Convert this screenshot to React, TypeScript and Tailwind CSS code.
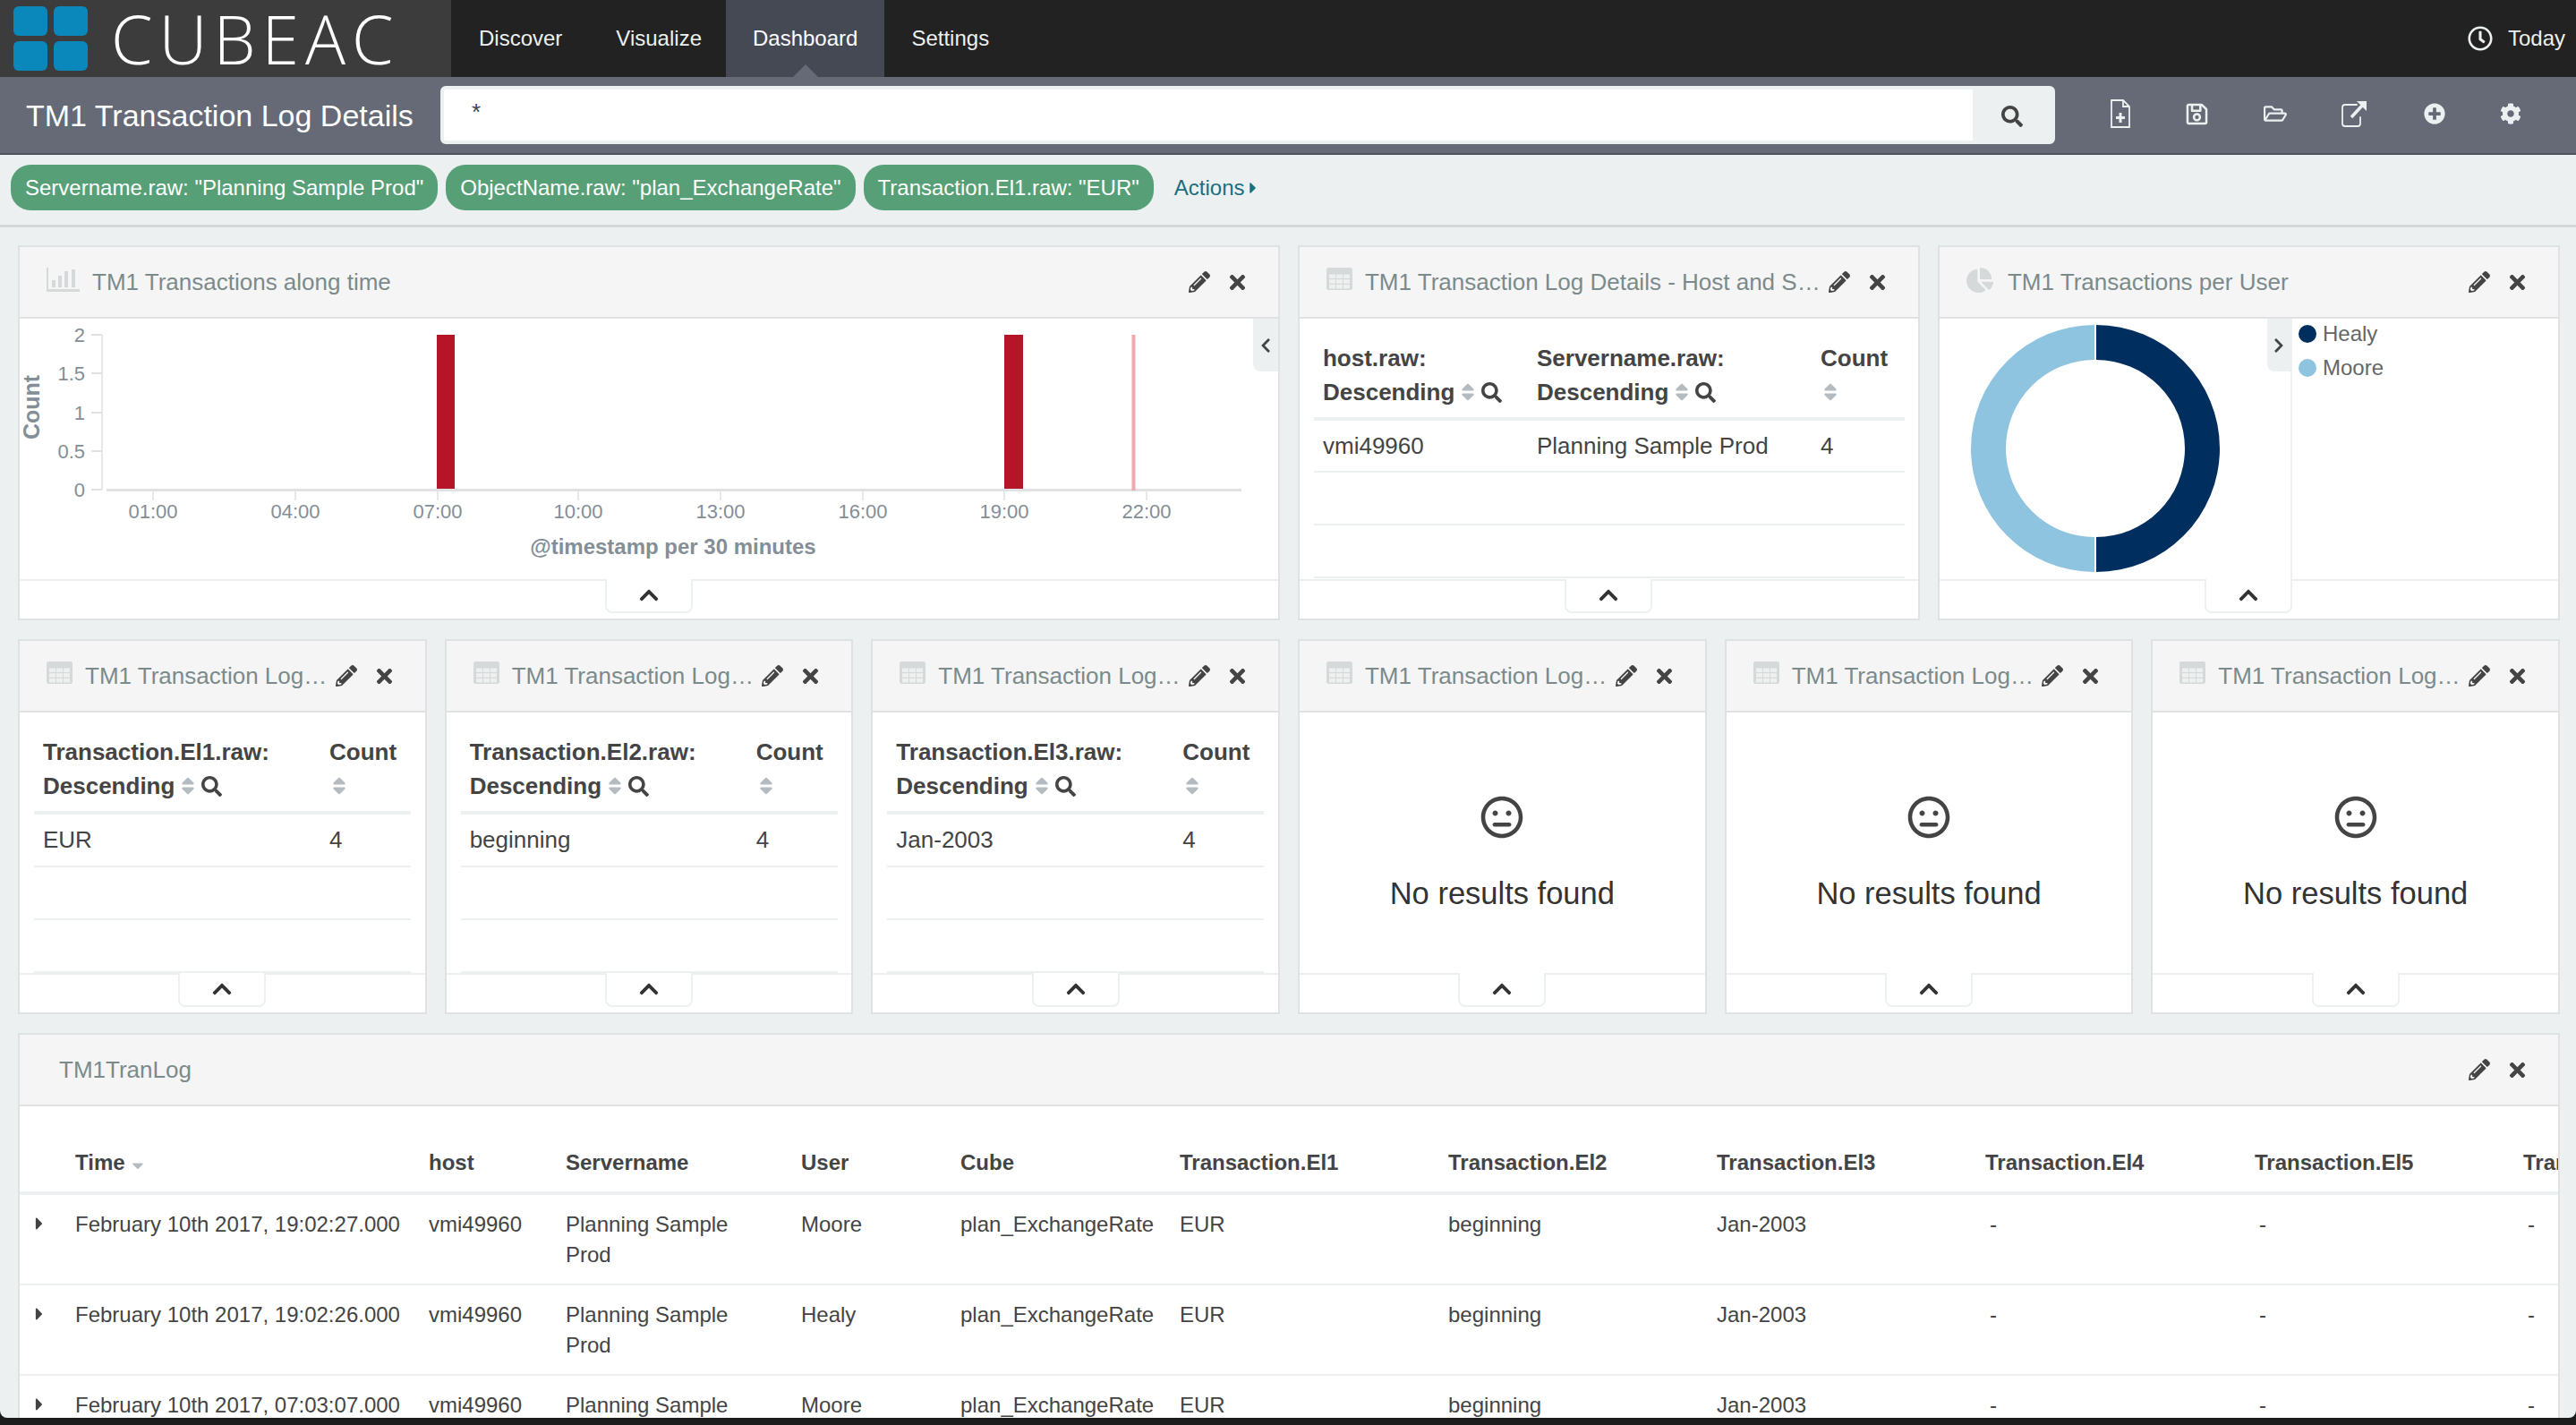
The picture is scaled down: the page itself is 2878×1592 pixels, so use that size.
import type { ReactNode } from 'react';
import {
  FaCaretDown,
  FaCaretRight,
  FaChartPie,
  FaChevronLeft,
  FaChevronRight,
  FaChevronUp,
  FaCog,
  FaPencilAlt,
  FaPlusCircle,
  FaRegClock,
  FaRegFolderOpen,
  FaRegMeh,
  FaRegSave,
  FaSearch,
  FaSort,
  FaTimes,
} from 'react-icons/fa';

const navItems = ['Discover', 'Visualize', 'Dashboard', 'Settings'];
const filters = [
  'Servername.raw: "Planning Sample Prod"',
  'ObjectName.raw: "plan_ExchangeRate"',
  'Transaction.El1.raw: "EUR"',
];

function BarChartIcon() {
  return (
    <svg width="37" height="27" viewBox="0 0 37 27" className="-mt-[5px] shrink-0 text-[#d5d9da]" fill="currentColor">
      <rect x="0" y="0" width="2" height="27" />
      <rect x="0" y="24" width="37" height="3" />
      <rect x="6" y="14" width="4" height="8" />
      <rect x="13" y="9" width="4" height="13" />
      <rect x="20" y="4" width="4" height="18" />
      <rect x="28" y="2" width="4" height="20" />
    </svg>
  );
}

// fa-table has a header band and three rows of small cells
function TableIcon() {
  const cells = [];
  for (let r = 0; r < 3; r++) {
    for (let c = 0; c < 3; c++) {
      cells.push(<rect key={`${r}${c}`} x={3 + c * 8} y={7.5 + r * 5.7} width="7" height="4.5" fill="#eef0f0" />);
    }
  }
  return (
    <svg width="29" height="25" viewBox="0 0 29 25" className="-mt-[7px] shrink-0">
      <rect width="29" height="25" rx="2.5" fill="#d5d9da" />
      {cells}
    </svg>
  );
}

function FilePlusIcon() {
  return (
    <svg width="22" height="32" viewBox="0 0 22 32" fill="none" stroke="currentColor" strokeWidth="1.8">
      <path d="M1 1h13l7 7v23H1z" />
      <path d="M14 1v7h7" />
      <path d="M11 15v11M6 20.5h10" strokeWidth="3" />
    </svg>
  );
}

function ShareIcon() {
  return (
    <svg width="28" height="30" viewBox="0 0 28 30" fill="none" stroke="currentColor" strokeWidth="1.8">
      <path d="M17 5H4a3 3 0 0 0-3 3v18a3 3 0 0 0 3 3h14a3 3 0 0 0 3-3v-7" strokeLinecap="round" />
      <path d="M11 19 23 6" strokeWidth="3.5" />
      <path d="M17 1h11v11z" fill="currentColor" stroke="none" />
    </svg>
  );
}

function Panel({
  title,
  icon,
  className,
  footer = true,
  children,
}: {
  title: string;
  icon?: ReactNode;
  className: string;
  footer?: boolean;
  children: ReactNode;
}) {
  return (
    <section className={`relative flex flex-col border-2 border-[#dfe1e2] bg-white ${className}`}>
      <header className="flex h-[80px] shrink-0 items-center border-b-2 border-[#dfe1e2] bg-[#f5f5f5] pr-[33px] pl-[30px]">
        {icon}
        <h2 className="ml-[14px] min-w-0 flex-1 truncate text-[26px] text-[#7b8a8b]">{title}</h2>
        <FaPencilAlt size={24} className="ml-[9px] shrink-0 text-[#444]" />
        <FaTimes size={25} className="ml-[18px] shrink-0 text-[#444]" />
      </header>
      <div className="relative min-h-0 flex-1 overflow-hidden">{children}</div>
      {footer && (
        <footer className="flex h-[44px] shrink-0 justify-center border-t-2 border-[#ecf0f1]">
          <button className="-mt-[2px] flex h-[38px] w-[98px] items-center justify-center rounded-b-[8px] border-x-2 border-b-2 border-[#ecf0f1] bg-white text-[#333]">
            <FaChevronUp size={24} />
          </button>
        </footer>
      )}
    </section>
  );
}

function SortHead({ lines }: { lines: string }) {
  return (
    <th className="pt-[25px] pb-[9px] pl-[10px] text-left align-top text-[26px] leading-[38px] font-bold text-[#444]">
      <div>{lines}:</div>
      <div className="flex h-[38px] items-center">
        Descending
        <FaSort size={24} className="ml-[3px] text-[#b4bcc2]" />
        <FaSearch size={23} className="ml-[3px] text-[#444]" />
      </div>
    </th>
  );
}

function CountHead() {
  return (
    <th className="pt-[25px] pb-[9px] pl-[10px] text-left align-top text-[26px] leading-[38px] font-bold text-[#444]">
      <div>Count</div>
      <div className="flex h-[38px] items-center">
        <FaSort size={24} className="-ml-[1px] text-[#b4bcc2]" />
      </div>
    </th>
  );
}

function EmptyRows({ span }: { span: number }) {
  return (
    <>
      {[0, 1].map((i) => (
        <tr key={i} className="border-b-2 border-[#ecf0f1]">
          <td colSpan={span} className="h-[59px]" />
        </tr>
      ))}
    </>
  );
}

function TermTable({ field, value }: { field: string; value: string }) {
  return (
    <table className="mx-[16px] w-[421px] table-fixed">
      <colgroup>
        <col className="w-[320px]" />
        <col />
      </colgroup>
      <thead>
        <tr className="border-b-4 border-[#ecf0f1]">
          <SortHead lines={field} />
          <CountHead />
        </tr>
      </thead>
      <tbody className="text-[26px] leading-[37px] text-[#444]">
        <tr className="border-b-2 border-[#ecf0f1]">
          <td className="h-[60px] pl-[10px]">{value}</td>
          <td className="pl-[10px]">4</td>
        </tr>
        <EmptyRows span={2} />
      </tbody>
    </table>
  );
}

function NoResults() {
  return (
    <div className="flex h-full flex-col items-center pt-[93px] text-[#444]">
      <FaRegMeh size={48} />
      <p className="mt-[37px] text-[34.5px] leading-[48px] text-[#333]">No results found</p>
    </div>
  );
}

function TimeChart() {
  const yTicks: [string, number][] = [['2', 374], ['1.5', 417], ['1', 461], ['0.5', 504], ['0', 547]];
  const xTicks: [string, number][] = [
    ['01:00', 171],
    ['04:00', 330],
    ['07:00', 489],
    ['10:00', 646],
    ['13:00', 805],
    ['16:00', 964],
    ['19:00', 1122],
    ['22:00', 1281],
  ];
  return (
    <svg viewBox="22 356 1406 291" className="block h-full w-full" preserveAspectRatio="xMinYMin meet">
      <path d="M114 374v173" stroke="#dfe1e2" strokeWidth="1.5" />
      <path d="M119 547.5h1268" stroke="#dfe1e2" strokeWidth="3" />
      {yTicks.map(([label, y]) => (
        <g key={label}>
          <path d={`M102 ${y}h12`} stroke="#dfe1e2" strokeWidth="2" />
          <text x="95" y={y + 8} textAnchor="end" fontSize="22" fill="#848e96">
            {label}
          </text>
        </g>
      ))}
      {xTicks.map(([label, x]) => (
        <g key={label}>
          <path d={`M${x} 548v11`} stroke="#dfe1e2" strokeWidth="1.5" />
          <text x={x} y="579" textAnchor="middle" fontSize="22" fill="#848e96">
            {label}
          </text>
        </g>
      ))}
      <rect x="488" y="374" width="20" height="172" fill="#b61427" />
      <rect x="1122" y="374" width="21" height="172" fill="#b61427" />
      <rect x="1264.5" y="374" width="4" height="174" fill="#efaab0" />
      <text x="752" y="619" textAnchor="middle" fontSize="24" fontWeight="700" fill="#848e96">
        @timestamp per 30 minutes
      </text>
      <text
        x="44"
        y="455"
        textAnchor="middle"
        fontSize="25"
        fontWeight="700"
        fill="#848e96"
        transform="rotate(-90 44 455)"
      >
        Count
      </text>
    </svg>
  );
}

function Donut() {
  return (
    <svg viewBox="2168 356 392 291" className="block h-full w-[392px] shrink-0">
      <path d="M2343 363A138 138 0 0 1 2343 639V600A99 99 0 0 0 2343 402Z" fill="#002f5f" />
      <path d="M2341 363A138 138 0 0 0 2341 639V600A99 99 0 0 1 2341 402Z" fill="#8fc4e0" />
    </svg>
  );
}

const logColumns = [
  'w-[62px]',
  'w-[395px]',
  'w-[153px]',
  'w-[263px]',
  'w-[178px]',
  'w-[245px]',
  'w-[300px]',
  'w-[300px]',
  'w-[300px]',
  'w-[301px]',
  'w-[300px]',
  'w-[300px]',
];

const logHeads = [
  'host',
  'Servername',
  'User',
  'Cube',
  'Transaction.El1',
  'Transaction.El2',
  'Transaction.El3',
  'Transaction.El4',
  'Transaction.El5',
  'Transaction.El6',
];

const logRows = [
  ['February 10th 2017, 19:02:27.000', 'Moore'],
  ['February 10th 2017, 19:02:26.000', 'Healy'],
  ['February 10th 2017, 07:03:07.000', 'Moore'],
];

function LogTable() {
  return (
    <table className="w-[2897px] table-fixed text-[24px] leading-[34px] text-[#444]">
      <colgroup>
        {logColumns.map((c, i) => (
          <col key={i} className={c} />
        ))}
      </colgroup>
      <thead>
        <tr className="h-[97px] border-b-4 border-[#ecf0f1]">
          <th />
          <th className="pb-[15px] text-left align-bottom font-bold">
            <span className="inline-flex items-center">
              Time
              <FaCaretDown size={20} className="mt-[6px] ml-[4px] text-[#b4bcc2]" />
            </span>
          </th>
          {logHeads.map((h) => (
            <th key={h} className="pb-[15px] text-left align-bottom font-bold whitespace-nowrap">
              {h}
            </th>
          ))}
        </tr>
      </thead>
      <tbody>
        {logRows.map(([time, user]) => (
          <tr key={time} className="border-b-2 border-[#ecf0f1]">
            <td className="pt-[16px] pb-[15px] pl-[11px] align-top">
              <FaCaretRight size={22} className="mt-[5px]" />
            </td>
            <td className="pt-[16px] pb-[15px] align-top whitespace-nowrap">{time}</td>
            <td className="pt-[16px] pb-[15px] align-top">vmi49960</td>
            <td className="pt-[16px] pr-[40px] pb-[15px] align-top">Planning Sample Prod</td>
            <td className="pt-[16px] pb-[15px] align-top">{user}</td>
            <td className="pt-[16px] pb-[15px] align-top">plan_ExchangeRate</td>
            <td className="pt-[16px] pb-[15px] align-top">EUR</td>
            <td className="pt-[16px] pb-[15px] align-top">beginning</td>
            <td className="pt-[16px] pb-[15px] align-top">Jan-2003</td>
            <td className="pt-[16px] pb-[15px] pl-[5px] align-top">-</td>
            <td className="pt-[16px] pb-[15px] pl-[5px] align-top">-</td>
            <td className="pt-[16px] pb-[15px] pl-[5px] align-top">-</td>
          </tr>
        ))}
      </tbody>
    </table>
  );
}

export default function App() {
  return (
    <div className="h-[1592px] w-[2878px] overflow-hidden bg-[#1c1c1c] font-['Liberation_Sans',Arial,sans-serif]">
      <div className="h-[1584px] overflow-hidden rounded-b-[8px] bg-[#ecf0f1]">
        <nav className="flex h-[86px] bg-[#222] text-[24px] text-[#ecf0f1]">
          <div className="flex w-[504px] items-center bg-[#3c3c3c] pl-[15px]">
            <div className="grid w-[83px] grid-cols-2 gap-x-[7px] gap-y-[6px]">
              {[0, 1, 2, 3].map((i) => (
                <div key={i} className="h-[33px] rounded-[6px] bg-[#0a87bb]" />
              ))}
            </div>
            <span className="ml-[26px] font-['Open_Sans',sans-serif] text-[75px] leading-[86px] font-light tracking-[7px] text-white">
              CUBEAC
            </span>
          </div>
          <div className="flex pl-[1px]">
            {navItems.map((item) => (
              <a
                key={item}
                className={
                  item === 'Dashboard'
                    ? 'relative -ml-[3px] flex items-center bg-[#444953] px-[30px] text-white'
                    : 'flex items-center px-[30px]'
                }
              >
                {item}
                {item === 'Dashboard' && (
                  <span className="absolute bottom-0 left-1/2 -ml-[14px] h-0 w-0 border-x-[14px] border-b-[14px] border-x-transparent border-b-[#656a76]" />
                )}
              </a>
            ))}
          </div>
          <div className="ml-auto flex items-center pr-[12px]">
            <FaRegClock size={28} />
            <span className="ml-[17px] text-[#ecf0f1]">Today</span>
          </div>
        </nav>

        <div className="flex h-[87px] items-center border-b-2 border-[#4d525c] bg-[#656a76] pl-[29px]">
          <h1 className="w-[463px] shrink-0 pt-[2px] text-[34px] text-white">TM1 Transaction Log Details</h1>
          <div className="flex h-[65px] w-[1804px] shrink-0 overflow-hidden rounded-[6px] border-4 border-[#ecf0f1] bg-white">
            <div className="flex-1 pt-[6px] pl-[31px] text-[26px] text-[#444]">*</div>
            <div className="flex w-[88px] items-center justify-center bg-[#ecf0f1] pt-[2px] text-[#444]">
              <FaSearch size={24} />
            </div>
          </div>
          <div className="-mt-[3px] ml-[62px] flex items-center gap-[61px] text-[#ecf0f1]">
            <FilePlusIcon />
            <FaRegSave size={27} />
            <FaRegFolderOpen size={26} />
            <ShareIcon />
            <FaPlusCircle size={24} className="ml-[3px]" />
            <FaCog size={24} />
          </div>
        </div>

        <div className="flex h-[81px] items-center gap-[9px] border-b-[3px] border-[#d4d8d8] pb-[6px] pl-[12px] text-[24px] text-white">
          {filters.map((f) => (
            <span
              key={f}
              className="flex h-[51px] items-center rounded-[22px] bg-[#57a077] px-[16px] pt-[2px] whitespace-nowrap"
            >
              {f}
            </span>
          ))}
          <a className="ml-[14px] flex items-center pt-[2px] text-[#1a6f80]">
            Actions
            <FaCaretRight size={20} />
          </a>
        </div>

        <main className="grid grid-cols-12 gap-x-[20px] gap-y-[21px] pt-[20px] pr-[18px] pl-[20px]">
          <Panel title="TM1 Transactions along time" icon={<BarChartIcon />} className="col-span-6 h-[419px]">
            <TimeChart />
            <button className="absolute top-0 right-0 flex h-[59px] w-[28px] items-center justify-center rounded-bl-[8px] bg-[#ecf0f1] text-[#444]">
              <FaChevronLeft size={18} />
            </button>
          </Panel>
          <Panel
            title="TM1 Transaction Log Details - Host and Server"
            icon={<TableIcon />}
            className="col-span-3 h-[419px]"
          >
            <table className="mx-[16px] w-[660px] table-fixed">
              <colgroup>
                <col className="w-[239px]" />
                <col className="w-[317px]" />
                <col />
              </colgroup>
              <thead>
                <tr className="border-b-4 border-[#ecf0f1]">
                  <SortHead lines="host.raw" />
                  <SortHead lines="Servername.raw" />
                  <CountHead />
                </tr>
              </thead>
              <tbody className="text-[26px] leading-[37px] text-[#444]">
                <tr className="border-b-2 border-[#ecf0f1]">
                  <td className="h-[59px] pl-[10px]">vmi49960</td>
                  <td className="pl-[10px]">Planning Sample Prod</td>
                  <td className="pl-[10px]">4</td>
                </tr>
                <EmptyRows span={3} />
              </tbody>
            </table>
          </Panel>
          <Panel
            title="TM1 Transactions per User"
            icon={<FaChartPie size={30} className="mr-[2px] -mt-[5px] shrink-0 text-[#d5d9da]" />}
            className="col-span-3 h-[419px]"
          >
            <div className="flex h-full">
              <Donut />
              <ul className="-mt-[2px] flex-1 border-l-2 border-[#ecf0f1] pl-[7px] text-[24px] leading-[38px] text-[#666]">
                <li className="flex items-center gap-[7px]">
                  <span className="h-[20px] w-[20px] rounded-full bg-[#002f5f]" />
                  Healy
                </li>
                <li className="flex items-center gap-[7px]">
                  <span className="h-[20px] w-[20px] rounded-full bg-[#8fc4e0]" />
                  Moore
                </li>
              </ul>
            </div>
            <button className="absolute top-0 left-[366px] flex h-[59px] w-[26px] items-center justify-center rounded-bl-[8px] bg-[#ecf0f1] text-[#444]">
              <FaChevronRight size={18} />
            </button>
          </Panel>

          <Panel title="TM1 Transaction Log Details" icon={<TableIcon />} className="col-span-2 h-[419px]">
            <TermTable field="Transaction.El1.raw" value="EUR" />
          </Panel>
          <Panel title="TM1 Transaction Log Details" icon={<TableIcon />} className="col-span-2 h-[419px]">
            <TermTable field="Transaction.El2.raw" value="beginning" />
          </Panel>
          <Panel title="TM1 Transaction Log Details" icon={<TableIcon />} className="col-span-2 h-[419px]">
            <TermTable field="Transaction.El3.raw" value="Jan-2003" />
          </Panel>
          <Panel title="TM1 Transaction Log Details" icon={<TableIcon />} className="col-span-2 h-[419px]">
            <NoResults />
          </Panel>
          <Panel title="TM1 Transaction Log Details" icon={<TableIcon />} className="col-span-2 h-[419px]">
            <NoResults />
          </Panel>
          <Panel title="TM1 Transaction Log Details" icon={<TableIcon />} className="col-span-2 h-[419px]">
            <NoResults />
          </Panel>

          <Panel title="TM1TranLog" footer={false} className="col-span-12 h-[560px]">
            <LogTable />
          </Panel>
        </main>
      </div>
    </div>
  );
}
